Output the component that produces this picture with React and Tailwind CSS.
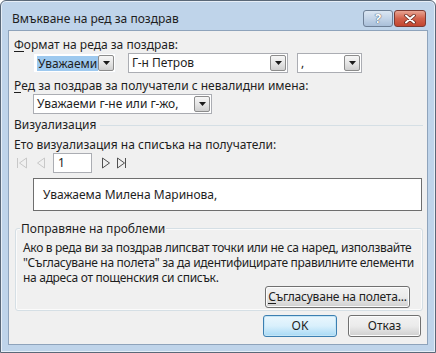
import React from 'react';

// Диалог „Вмъкване на ред за поздрав“ (Windows 7 стил)

const font = { fontFamily: '"Noto Sans", "Liberation Sans", sans-serif' };

function Arrow() {
  return (
    <svg width="7" height="4" viewBox="0 0 7 4">
      <path d="M0 0h7L3.5 4z" fill="#1a1a1a" />
    </svg>
  );
}

function DropButton() {
  return (
    <div className="w-[16px] h-[16px] my-[1px] mr-[1px] flex items-center justify-center border border-[#8c8c8c] rounded-[2px] bg-gradient-to-b from-[#f6f6f6] via-[#e6e6e6] to-[#cfcfcf]">
      <Arrow />
    </div>
  );
}

function Combo({ width, children, focused }) {
  return (
    <div
      className={`h-[20px] flex items-stretch bg-white border ${focused ? 'border-[#eef0f3]' : 'border-[#abadb3]'}`}
      style={{ width }}
    >
      <div className="flex-1 flex items-center pl-[3px] text-[12px] text-[#1e1e1e] overflow-hidden whitespace-nowrap">
        {children}
      </div>
      <DropButton />
    </div>
  );
}

function Button({ children, primary, className = '' }) {
  return (
    <div
      className={`h-[22px] flex items-center justify-center rounded-[3px] border text-[12px] text-[#1e1e1e] whitespace-nowrap ${
        primary
          ? 'border-[#3c7fb1] bg-gradient-to-b from-[#eaf6fd] via-[#d9f0fc] to-[#a7d9f5] shadow-[inset_0_0_0_1px_#c4e5f6]'
          : 'border-[#707070] bg-gradient-to-b from-[#f2f2f2] via-[#ebebeb] to-[#cfcfcf] shadow-[inset_0_0_0_1px_#fcfcfc]'
      } ${className}`}
    >
      {children}
    </div>
  );
}

function NavIcon({ kind, color }) {
  const paths = {
    first: 'M1.5 1v10M10.5 1L3.5 6l7 5z',
    prev: 'M8.5 1L1.5 6l7 5z',
    next: 'M1.5 1l7 5-7 5z',
    last: 'M1.5 1l7 5-7 5zM9.5 1v10',
  };
  return (
    <svg width="12" height="12" viewBox="0 0 12 12">
      <path d={paths[kind]} fill="none" stroke={color} strokeWidth="1" strokeLinejoin="round" />
    </svg>
  );
}

function Key({ children }) {
  return <u className="no-underline border-b border-[#1e1e1e] leading-[13px] inline-block">{children}</u>;
}

export default function App() {
  return (
    <div style={font} className="w-[436px] h-[353px] flex flex-col bg-[#bfd4ea] border border-[#5a6878] rounded-t-[6px] shadow-[inset_0_0_0_1px_#e6eef7] overflow-hidden">
      {/* заглавна лента */}
      <div className="h-[29px] flex items-start">
        <div className="pl-[11px] pt-[10px] text-[12px] leading-[16px] text-[#1e1e1e]">Вмъкване на ред за поздрав</div>
        <div className="ml-auto mt-[9px] mr-[9px] flex gap-[1px]">
          <div className="w-[30px] h-[17px] rounded-[3px] border border-[#6d7f96] bg-gradient-to-b from-[#dbe6f3] via-[#c3d4e8] to-[#a9bfd9] flex items-center justify-center">
            <span className="text-[13px] font-bold leading-none text-white [text-shadow:0_0_1px_#3a4a5e,0_0_1px_#3a4a5e]">?</span>
          </div>
          <div className="w-[32px] h-[17px] rounded-[3px] border border-[#7d3a32] bg-gradient-to-b from-[#e8a493] via-[#d2624c] to-[#c2452f] flex items-center justify-center">
            <svg width="12" height="10" viewBox="0 0 12 10">
              <path d="M2 1.5l8 7M10 1.5l-8 7" stroke="#5a2218" strokeWidth="3.4" strokeLinecap="round" />
              <path d="M2 1.5l8 7M10 1.5l-8 7" stroke="#fff" strokeWidth="2" strokeLinecap="round" />
            </svg>
          </div>
        </div>
      </div>

      {/* клиентска област */}
      <div className="mx-[7px] mb-[7px] flex-1 bg-[#f0f0f0] border border-[#8ea3bb] flex flex-col text-[12px] leading-[16px] text-[#1e1e1e]">
        <div className="pl-[5px] mt-[6px]"><Key>Ф</Key>ормат на реда за поздрав:</div>

        <div className="flex items-center pl-[24px]">
          <Combo width="83px" focused>
            <span className="bg-[#9dc9ef] px-[1px] leading-[15px]">Уважаеми</span>
          </Combo>
          <div className="ml-[12px]">
            <Combo width="160px">Г-н Петров</Combo>
          </div>
          <div className="ml-[9px]">
            <Combo width="65px">,</Combo>
          </div>
        </div>

        <div className="pl-[5px] mt-[5px]"><Key>Р</Key>ед за поздрав за получатели с невалидни имена:</div>
        <div className="pl-[24px]">
          <Combo width="179px">Уважаеми г-не или г-жо,</Combo>
        </div>

        <div className="flex items-center pl-[5px] mt-[3px] pr-[4px]">
          <span>Визуализация</span>
          <div className="flex-1 ml-[4px] h-px bg-[#d5dfe5]" />
        </div>
        <div className="pl-[5px] mt-[4px]">Ето визуализация на списъка на получатели:</div>

        <div className="flex items-center pl-[7px] h-[20px]">
          <NavIcon kind="first" color="#c8c8c8" />
          <div className="ml-[8px]"><NavIcon kind="prev" color="#c8c8c8" /></div>
          <div className="ml-[5px] w-[39px] h-[20px] bg-white border border-[#abadb3] flex items-center pl-[4px]">1</div>
          <div className="ml-[9px]"><NavIcon kind="next" color="#505050" /></div>
          <div className="ml-[3px]"><NavIcon kind="last" color="#505050" /></div>
        </div>

        <div className="ml-[24px] mr-[5px] mt-[5px] h-[33px] bg-white border border-[#6e6e6e] flex items-center pl-[9px]">
          Уважаема Милена Маринова,
        </div>

        <div className="ml-[6px] mr-[4px] mt-[17px] h-[83px] border border-[#d5dfe5] rounded-[3px] shadow-[inset_0_0_0_1px_#fbfbfb] flex flex-col">
          <div className="-mt-[8px] ml-[4px] self-start bg-[#f0f0f0] px-[1px]">Поправяне на проблеми</div>
          <div className="pl-[7px] mt-[3px] leading-[15px] whitespace-nowrap tracking-[-0.3px]">
            Ако в реда ви за поздрав липсват точки или не са наред, използвайте
            <br />
            "Съгласуване на полета" за да идентифицирате правилните елементи
            <br />
            на адреса от пощенския си списък.
          </div>
          <div className="flex justify-end mt-[1px] pr-[12px]">
            <Button className="w-[145px] tracking-[-0.2px]">
              <span><Key>С</Key>ъгласуване на полета...</span>
            </Button>
          </div>
        </div>

        <div className="flex justify-end gap-[11px] mt-[4px] pr-[6px]">
          <Button primary className="w-[74px]">OK</Button>
          <Button className="w-[73px]">Отказ</Button>
        </div>
      </div>
    </div>
  );
}
